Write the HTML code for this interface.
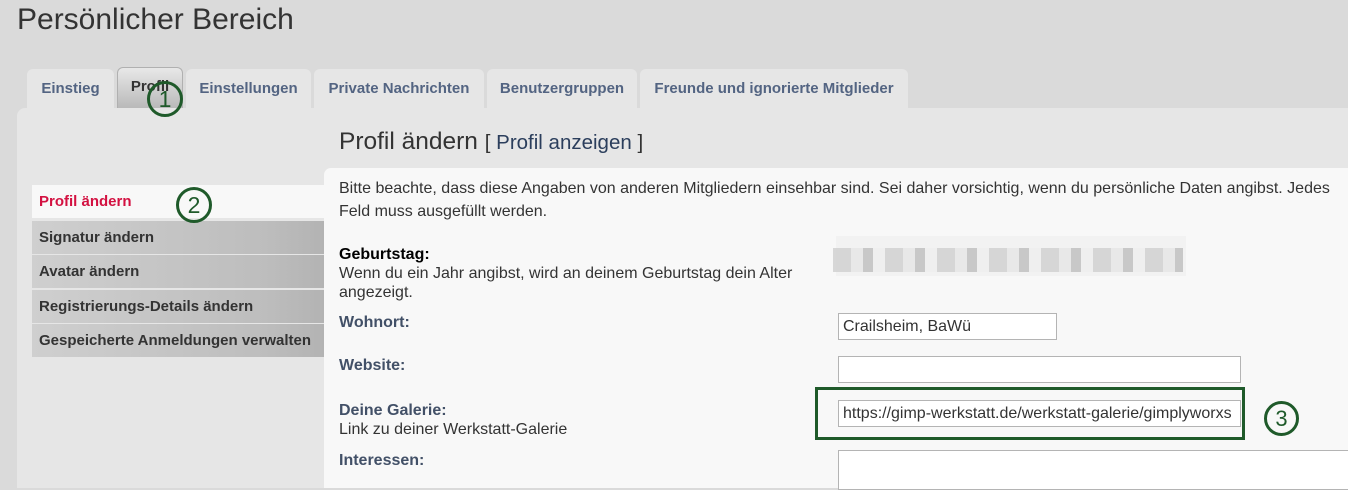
<!DOCTYPE html>
<html><head><meta charset="utf-8"><style>
*{margin:0;padding:0;box-sizing:border-box}
body{width:1348px;height:484px;overflow:hidden;background:#dadada;font-family:"Liberation Sans",sans-serif;position:relative}
.a{position:absolute}
h1{position:absolute;left:17px;top:3px;font-weight:normal;font-size:30px;color:#333}
.tab{position:absolute;top:69px;height:40px;background:#e6e6e6;border-radius:6px 6px 0 0;font-weight:bold;font-size:15px;color:#536482;text-align:center;line-height:40px;white-space:nowrap}
.tab.act{background:linear-gradient(#e8e8e8,#b8b8b8);color:#333;border:1px solid #b0b0b0;border-bottom:none;top:67px;height:42px;line-height:38px}
.panel{left:17px;top:108px;width:1340px;height:380px;background:#e6e6e6;border-radius:8px 0 0 0}
.content{left:324px;top:168px;width:1030px;height:320px;background:#f8f8f8;border-radius:7px 0 0 0}
.nav{position:absolute;left:32px;width:292px;height:33px;background:linear-gradient(90deg,#cfcfcf,#bdbdbd 80%,#b3b3b3);font-weight:bold;font-size:15px;color:#333;line-height:34px;padding-left:7px;white-space:nowrap}
.t{position:absolute;font-size:16px;color:#333;white-space:nowrap}
.lbl{font-weight:bold;color:#425067}
.inp{position:absolute;background:#fff;border:1px solid #b4b4b4;font-size:16px;color:#333;padding-left:4px;line-height:25px;overflow:hidden;white-space:nowrap}
.circ{position:absolute;width:36px;height:36px;border:3px solid #1f5a2a;border-radius:50%;color:#1f5a2a;font-size:23px;text-align:center;line-height:30px}
</style></head><body>
<h1>Persönlicher Bereich</h1>
<div class="tab" style="left:27px;width:87px">Einstieg</div>
<div class="tab act" style="left:117px;width:66px">Profil</div>
<div class="tab" style="left:186px;width:125px">Einstellungen</div>
<div class="tab" style="left:314px;width:170px">Private Nachrichten</div>
<div class="tab" style="left:487px;width:150px">Benutzergruppen</div>
<div class="tab" style="left:640px;width:268px">Freunde und ignorierte Mitglieder</div>
<div class="a panel"></div>
<div class="a" style="left:339px;top:128px;font-size:24.5px;color:#333;white-space:nowrap">Profil ändern <span style="font-size:20.5px">[ <span style="color:#2b3e5c">Profil anzeigen</span> ]</span></div>
<div class="a content"></div>
<div class="nav" style="top:185px;background:#f8f8f8;color:#d31141">Profil ändern</div>
<div class="nav" style="top:221px">Signatur ändern</div>
<div class="nav" style="top:255px">Avatar ändern</div>
<div class="nav" style="top:290px">Registrierungs-Details ändern</div>
<div class="nav" style="top:324px">Gespeicherte Anmeldungen verwalten</div>
<div class="t" style="left:339px;top:177px;line-height:23px">Bitte beachte, dass diese Angaben von anderen Mitgliedern einsehbar sind. Sei daher vorsichtig, wenn du persönliche Daten angibst. Jedes<br>Feld muss ausgefüllt werden.</div>
<div class="t" style="left:339px;top:245px;line-height:19px"><b style="color:#000">Geburtstag:</b><br>Wenn du ein Jahr angibst, wird an deinem Geburtstag dein Alter<br>angezeigt.</div>
<div class="a" style="left:836px;top:236px;width:350px;height:40px;background:#f2f2f2"></div>
<div class="a" style="left:833px;top:248px;width:350px;height:24px;background:repeating-linear-gradient(90deg,#cfcfcf 0 18px,#e5e5e5 18px 30px,#bdbdbd 30px 40px,#eee 40px 52px);opacity:.8"></div>
<div class="t lbl" style="left:339px;top:314px">Wohnort:</div>
<div class="inp" style="left:838px;top:313px;width:219px;height:27px">Crailsheim, BaWü</div>
<div class="t lbl" style="left:339px;top:357px">Website:</div>
<div class="inp" style="left:838px;top:356px;width:403px;height:27px"></div>
<div class="t" style="left:339px;top:401px;line-height:19px"><b class="lbl">Deine Galerie:</b><br>Link zu deiner Werkstatt-Galerie</div>
<div class="a" style="left:815px;top:387px;width:430px;height:53px;border:3px solid #1f5a2a"></div>
<div class="inp" style="left:838px;top:400px;width:403px;height:27px">https://gimp-werkstatt.de/werkstatt-galerie/gimplyworxs</div>
<div class="t lbl" style="left:339px;top:452px">Interessen:</div>
<div class="inp" style="left:838px;top:450px;width:520px;height:40px"></div>
<div class="circ" style="left:147px;top:81px">1</div>
<div class="circ" style="left:176px;top:187px">2</div>
<div class="circ" style="left:1264px;top:401px;width:35px;height:35px;line-height:29px;font-size:22px">3</div>
</body></html>
